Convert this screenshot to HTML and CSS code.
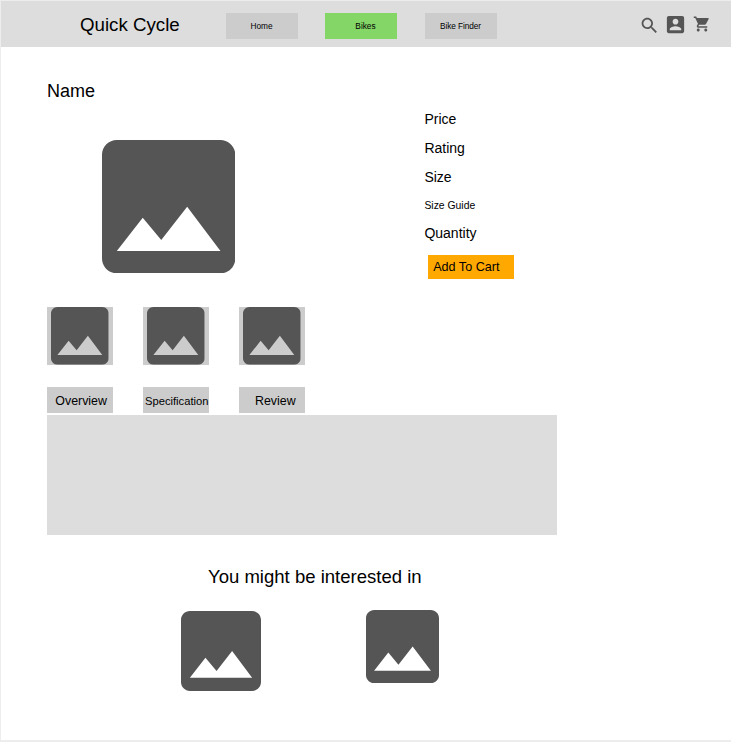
FILE: index.html
```html
<!DOCTYPE html>
<html lang="en">
<head>
<meta charset="utf-8">
<title>Quick Cycle</title>
<link rel="stylesheet" href="styles.css">
</head>
<body>
<svg class="defs" aria-hidden="true">
  <symbol id="image" viewBox="3 3 18 18"><path d="M21 19V5c0-1.1-.9-2-2-2H5c-1.1 0-2 .9-2 2v14c0 1.1.9 2 2 2h14c1.1 0 2-.9 2-2zM8.5 13.5l2.5 3.01L14.5 12l4.5 6H5l3.5-4.5z"/></symbol>
</svg>
<div class="page">
  <header class="topbar">
    <div class="brand">Quick Cycle</div>
    <nav class="nav">
      <a class="nav-item">Home</a>
      <a class="nav-item active">Bikes</a>
      <a class="nav-item">Bike Finder</a>
    </nav>
    <div class="actions">
      <svg class="icon search" viewBox="0 0 24 24"><path d="M15.5 14h-.79l-.28-.27C15.41 12.59 16 11.11 16 9.5 16 5.91 13.09 3 9.5 3S3 5.91 3 9.5 5.91 16 9.5 16c1.61 0 3.09-.59 4.23-1.57l.27.28v.79l5 4.99L20.49 19l-4.99-5zm-6 0C7.01 14 5 11.99 5 9.5S7.01 5 9.5 5 14 7.01 14 9.5 11.99 14 9.5 14z"/></svg>
      <svg class="icon account" viewBox="0 0 24 24"><path d="M3 5v14c0 1.1.89 2 2 2h14c1.1 0 2-.9 2-2V5c0-1.1-.9-2-2-2H5c-1.11 0-2 .9-2 2zm12 4c0 1.66-1.34 3-3 3s-3-1.34-3-3 1.34-3 3-3 3 1.34 3 3zm-9 8c0-2 4-3.1 6-3.1s6 1.1 6 3.1v1H6v-1z"/></svg>
      <svg class="icon cart" viewBox="0 0 24 24"><path d="M7 18c-1.1 0-1.99.9-1.99 2S5.9 22 7 22s2-.9 2-2-.9-2-2-2zM1 2v2h2l3.6 7.59-1.35 2.45c-.16.28-.25.61-.25.96 0 1.1.9 2 2 2h12v-2H7.42c-.14 0-.25-.11-.25-.25l.03-.12.9-1.63h7.45c.75 0 1.41-.41 1.75-1.03l3.58-6.49c.08-.14.12-.31.12-.48 0-.55-.45-1-1-1H5.21l-.94-2H1zm16 16c-1.1 0-1.99.9-1.99 2s.89 2 1.99 2 2-.9 2-2-.9-2-2-2z"/></svg>
    </div>
  </header>
  <main class="content">
    <h1 class="name">Name</h1>
    <section class="product">
      <div class="gallery">
        <svg class="photo"><use href="#image"/></svg>
        <div class="thumbs">
          <div class="thumb"><svg><use href="#image"/></svg></div>
          <div class="thumb"><svg><use href="#image"/></svg></div>
          <div class="thumb"><svg><use href="#image"/></svg></div>
        </div>
      </div>
      <div class="details">
        <div>Price</div>
        <div>Rating</div>
        <div>Size</div>
        <div class="guide">Size Guide</div>
        <div class="quantity">Quantity</div>
        <button class="add">Add To Cart</button>
      </div>
    </section>
    <div class="tabs">
      <div class="tab overview">Overview</div>
      <div class="tab specification">Specification</div>
      <div class="tab review">Review</div>
    </div>
    <div class="panel"></div>
    <h2 class="suggest-title">You might be interested in</h2>
    <div class="suggestions">
      <svg class="first"><use href="#image"/></svg>
      <svg class="second"><use href="#image"/></svg>
    </div>
  </main>
</div>
</body>
</html>
```
FILE: styles.css
```css
* { box-sizing: border-box; }
body {
  margin: 0;
  background: #fff;
  color: #000;
  font-family: "Liberation Sans", Arial, sans-serif;
}
svg { display: block; fill: #555; flex: none; }
.defs { display: none; }
.page {
  height: 742px;
  overflow: hidden;
  border: solid #ededed;
  border-width: 1px 0 2px 1px;
}
.topbar {
  display: flex;
  height: 46px;
  padding: 12px 0 0 79px;
  background: #ddd;
}
.brand {
  width: 145.5px;
  font-size: 18.7px;
  line-height: 24px;
  white-space: nowrap;
}
.nav { display: flex; gap: 27.5px; }
.nav-item {
  width: 72px;
  height: 26px;
  background: #ccc;
  font-size: 8.3px;
  line-height: 26px;
  text-align: center;
}
.nav-item.active { padding-left: 9px; background: #84d667; }
.nav-item:last-child { letter-spacing: -0.1px; }
.actions { display: flex; align-items: flex-start; margin-left: 142.5px; }
.search { width: 21px; height: 21px; margin-top: 2px; }
.account { width: 23px; height: 23px; margin: 0 0 0 4px; }
.cart { width: 18px; height: 18px; margin: 2px 0 0 6px; }

.content { padding: 32px 0 0 46px; }
h1, h2 { margin: 0; font-weight: 400; }
.name { font-size: 18px; line-height: 24px; }
.product { display: flex; height: 284px; }
.gallery { width: 377.4px; padding-top: 37px; }
.photo { width: 133.3px; height: 133.3px; margin-left: 55.2px; }
.thumbs { display: flex; gap: 30px; margin-top: 33.7px; }
.thumb { width: 66px; height: 58px; padding-left: 4px; background: #ccc; }
.thumb svg { width: 57.7px; height: 57.7px; }
.details { padding-top: 2px; font-size: 14px; line-height: 29px; }
.guide { font-size: 10.4px; line-height: 27px; }
.quantity { line-height: 28px; }
.add {
  display: block;
  width: 86px;
  height: 24px;
  margin: 8px 0 0 3.8px;
  padding: 0 0 0 5px;
  border: 0;
  background: #ffa800;
  color: #000;
  font: 12.6px/24px "Liberation Sans", Arial, sans-serif;
  text-align: left;
}
.tabs { display: flex; gap: 30px; }
.tab {
  width: 66px;
  height: 26px;
  background: #ccc;
  font-size: 12.4px;
  line-height: 28px;
  white-space: nowrap;
}
.overview { padding-left: 8.3px; }
.specification { padding-left: 2px; font-size: 11.2px; }
.review { padding-left: 16px; }
.panel { width: 510px; height: 120px; margin-top: 2px; background: #ddd; }
.suggest-title { margin: 30px 0 0 161px; font-size: 18.55px; line-height: 24px; }
.suggestions { display: flex; gap: 105px; margin: 21.2px 0 0 134px; }
.first { width: 80px; height: 80px; margin-top: 1px; }
.second { width: 73px; height: 73px; }
```
